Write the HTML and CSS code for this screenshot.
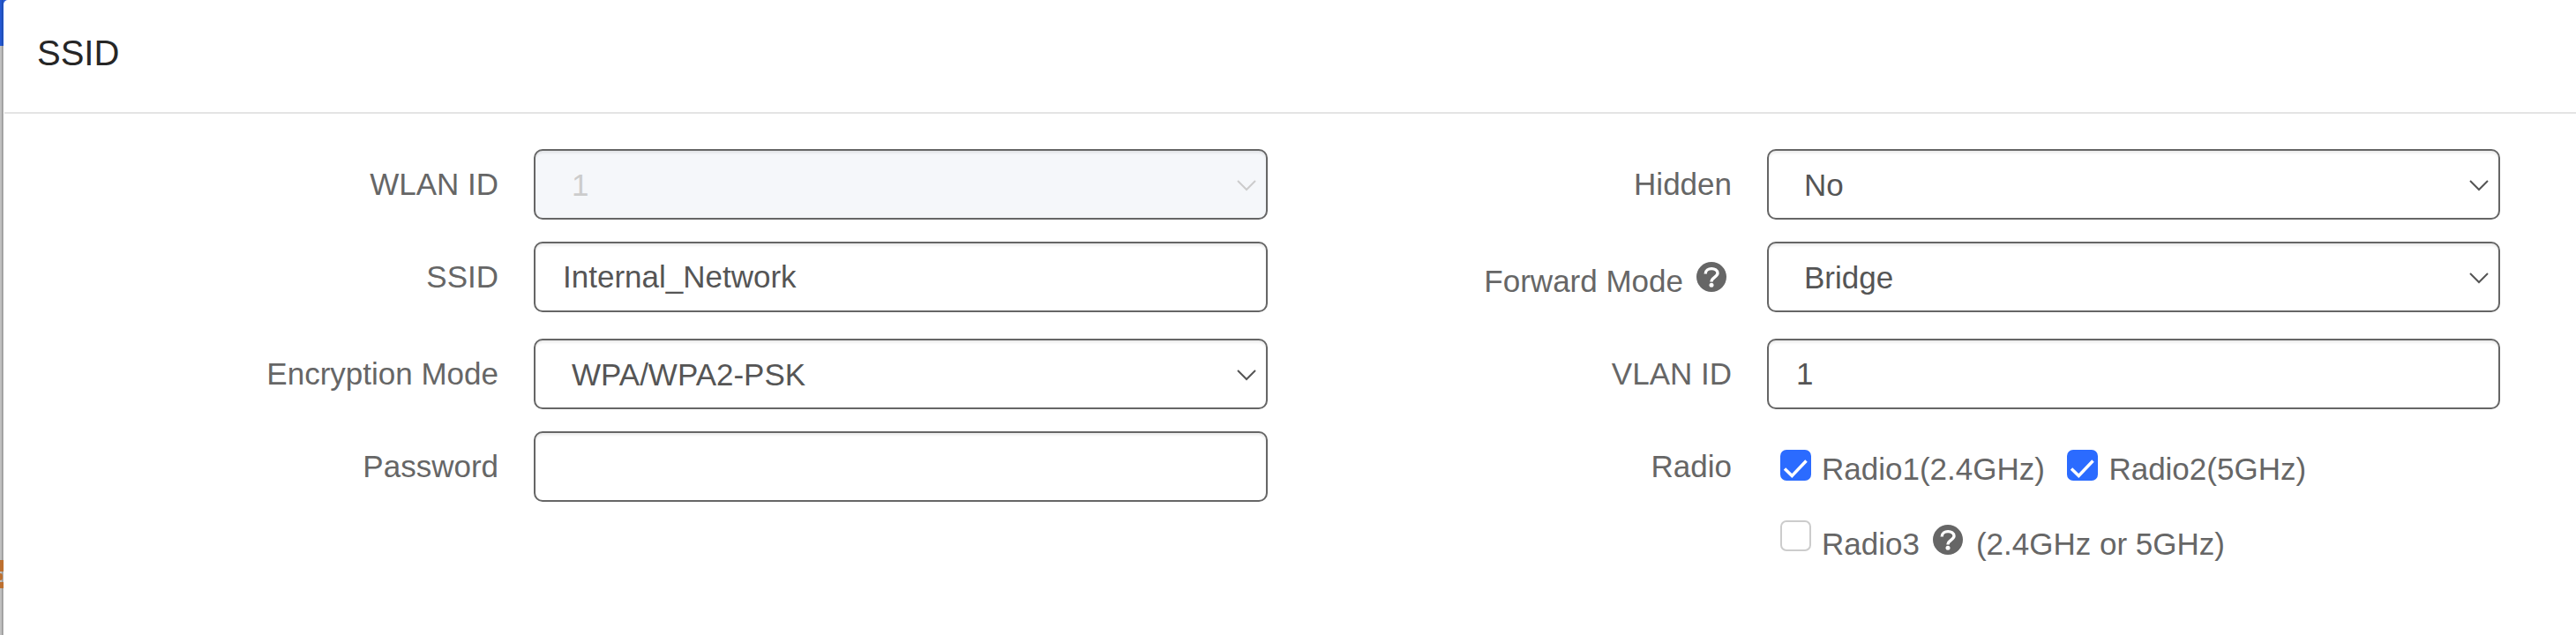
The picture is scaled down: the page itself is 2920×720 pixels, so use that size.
FILE: index.html
```
<!DOCTYPE html>
<html lang="en">
<head>
  <meta charset="UTF-8" />
  <meta name="viewport" content="width=device-width, initial-scale=1.0" />
  <title>SSID</title>
  <link rel="stylesheet" href="styles.css">
</head>
<body>
  <svg class="sprite">
    <symbol id="help" viewBox="0 0 34 34">
      <circle cx="17" cy="17" r="17" fill="#666" />
      <path d="M10.2 13.4 C10.2 5.8 24 5.8 24 12.8 C24 17 17 17.2 17 22.6" fill="none" stroke="#fff" stroke-width="3.4" />
      <circle cx="17" cy="26.2" r="2.5" fill="#fff" />
    </symbol>
    <symbol id="arrow" viewBox="0 0 22 13">
      <path d="M1 1 L11 11 L21 1" fill="none" stroke="currentColor" stroke-width="2" />
    </symbol>
    <symbol id="tick" viewBox="0 0 35 35">
      <path d="M5 21.5 L13.3 29.5 L29.5 12.5" fill="none" stroke="#fff" stroke-width="3.5" />
    </symbol>
  </svg>

  <div class="page">
    <div class="backdrop">
      <div class="topbar"></div>
      <div class="side"></div>
      <div class="tag"></div>
      <div class="tag-gap"></div>
      <div class="tag-end"></div>
    </div>

    <div class="dialog">
      <h1 class="title">SSID</h1>
      <form class="form">
        <div class="column">
          <div class="row">
            <label class="label">WLAN ID</label>
            <div class="field select disabled"><span>1</span><svg class="arrow"><use href="#arrow" /></svg></div>
          </div>
          <div class="row">
            <label class="label">SSID</label>
            <div class="field">Internal_Network</div>
          </div>
          <div class="row spaced">
            <label class="label">Encryption Mode</label>
            <div class="field select"><span>WPA/WPA2-PSK</span><svg class="arrow"><use href="#arrow" /></svg></div>
          </div>
          <div class="row">
            <label class="label">Password</label>
            <div class="field"></div>
          </div>
        </div>

        <div class="column right">
          <div class="row">
            <label class="label">Hidden</label>
            <div class="field select"><span>No</span><svg class="arrow"><use href="#arrow" /></svg></div>
          </div>
          <div class="row">
            <label class="label with-help">Forward Mode<svg class="help"><use href="#help" /></svg></label>
            <div class="field select"><span>Bridge</span><svg class="arrow"><use href="#arrow" /></svg></div>
          </div>
          <div class="row spaced">
            <label class="label">VLAN ID</label>
            <div class="field">1</div>
          </div>
          <div class="row">
            <label class="label">Radio</label>
            <div class="radios">
              <div class="radio-line">
                <span class="check checked"><svg><use href="#tick" /></svg></span>
                <span class="radio-text first">Radio1(2.4GHz)</span>
                <span class="check checked"><svg><use href="#tick" /></svg></span>
                <span class="radio-text">Radio2(5GHz)</span>
              </div>
              <div class="radio-line last">
                <span class="check"></span>
                <span class="radio-text">Radio3</span>
                <svg class="help"><use href="#help" /></svg>
                <span class="radio-text">(2.4GHz or 5GHz)</span>
              </div>
            </div>
          </div>
        </div>
      </form>
    </div>
  </div>
</body>
</html>
```
FILE: styles.css
```
* { box-sizing: border-box; }
body {
  margin: 0;
  font-family: "Liberation Sans", Arial, sans-serif;
  font-size: 35px;
  line-height: 40px;
  color: #666;
  background: #fff;
  overflow: hidden;
}
.sprite { display: none; }
.page {
  display: flex;
  height: 720px;
  background: linear-gradient(#2458d3 52px, #b9b9b9 52px);
}

/* strip of the page left of the dialog */
.backdrop {
  width: 4px;
  background: linear-gradient(to right, #c0c0c0 2px, #989898 2px, #989898 3px, #b4b4b4 3px);
}
.topbar { height: 52px; width: 4px; background: linear-gradient(to right, #2458d3 2px, #1e4aa8 2px, #1e4aa8 3px, #2458d3 3px); }
.side { height: 583px; }
.tag { height: 13px; width: 4px; background: #bd7030; }
.tag-gap { height: 8px; margin: 2px 0; width: 3px; border-radius: 0 3px 3px 0; background: #bd7030; }
.tag-end { height: 7px; width: 4px; background: #bd7030; }

.dialog {
  flex: 1;
  background: #fff;
  border-top-left-radius: 5px;
}
.title {
  margin: 0 0 0 1px;
  height: 129px;
  padding: 37px 37px 0;
  border-bottom: 2px solid #e4e4e4;
  font-size: 40px;
  font-weight: normal;
  line-height: 46px;
  color: #262626;
}
.form { display: flex; padding-top: 40px; }
.column {
  width: 1433px;
  display: flex;
  flex-direction: column;
  gap: 25px;
}
.column.right { width: 1397px; }
.row { display: flex; gap: 40px; height: 80px; }
.row.spaced { margin-top: 5px; }
.label { flex: 1; text-align: right; padding-top: 20px; }
.with-help {
  display: flex;
  justify-content: flex-end;
  gap: 15px;
  padding: 25px 6px 0 0;
}
.help { width: 34px; height: 34px; flex: none; }
.with-help .help { margin-top: -2px; }

.field {
  width: 832px;
  height: 80px;
  padding: 18px 31px;
  border: 2px solid #666;
  border-radius: 10px;
  box-shadow: inset 0 2.5px 2.5px rgba(0, 0, 0, 0.075);
  color: #555;
}
.right .field { width: 831px; }
.select {
  display: flex;
  justify-content: space-between;
  padding: 19px 11px 0 41px;
}
.right .select { padding-left: 40px; }
.disabled { background: #f5f7fa; color: #ccc; }
.arrow { width: 22px; height: 13px; margin-top: 14px; }

.radios { width: 831px; padding: 21px 0 0 15px; }
.radio-line { display: flex; height: 35px; }
.radio-line.last { margin-top: 45px; }
.check {
  width: 35px;
  height: 35px;
  margin-right: 12px;
  border: 2px solid #ccc;
  border-radius: 7px;
}
.check.checked { border: none; background: #2b6bff; }
.check svg { display: block; width: 35px; height: 35px; }
.radio-text { padding-top: 2px; }
.radio-text.first { margin-right: 25.5px; }
.last .radio-text { padding-top: 7px; }
.last .help { margin: 5px 15px 0; }
```
